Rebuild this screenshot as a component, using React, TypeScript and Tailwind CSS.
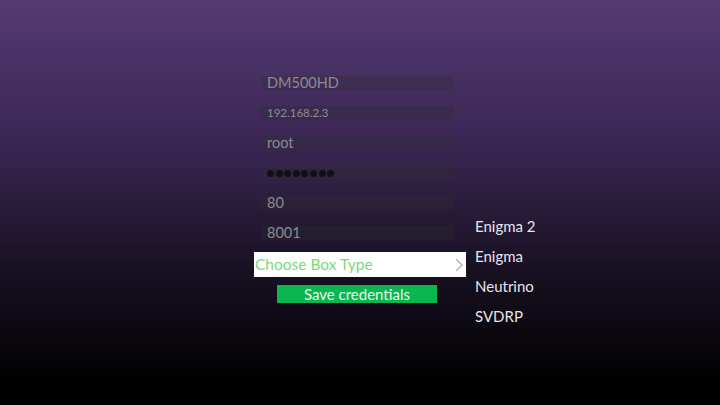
import React from "react";

const fields = ["DM500HD", "192.168.2.3", "root", "__dots__", "80", "8001"];
const types = ["Enigma 2", "Enigma", "Neutrino", "SVDRP"];

export default function App() {
  return (
    <div
      className="w-[720px] h-[405px] overflow-hidden bg-[linear-gradient(to_bottom,#553a72_0%,#3a2754_35%,#1a1224_65%,#000000_95%)] flex pl-[254px] pt-[76px]"
      style={{ fontFamily: "Lato, 'Noto Sans', sans-serif" }}
    >
      <div className="flex flex-col w-[212px]">
        {fields.map((f, i) => (
          <div
            key={i}
            className="ml-[7px] w-[193px] h-[14px] mb-[16px] bg-[rgba(45,45,50,0.3)] flex items-center pl-[6px] text-[#8e8a94] leading-none"
          >
            {f === "__dots__" ? (
              <div className="flex gap-[1.6px]">
                {Array.from({ length: 8 }).map((_, j) => (
                  <span key={j} className="w-[7px] h-[7px] rounded-full bg-[#121014]" />
                ))}
              </div>
            ) : (
              <span className={i === 1 ? "text-[11.5px]" : "text-[14.5px]"}>{f}</span>
            )}
          </div>
        ))}
        <div className="-mt-[4px] h-[25px] bg-white flex items-center justify-between pl-[1px] pr-[2px]">
          <span className="text-[15.5px] text-[#79da7c] leading-none">Choose Box Type</span>
          <svg width="10" height="16" viewBox="0 0 10 16" fill="none">
            <path d="M2 2 L8 8 L2 14" stroke="#b9b9b9" strokeWidth="1.5" />
          </svg>
        </div>
        <div className="mt-[8px] ml-[23px] w-[160px] h-[18px] bg-[#0bb54f] flex items-center justify-center">
          <span className="text-[15px] text-[#e9f7ec] leading-none">Save credentials</span>
        </div>
      </div>
      <div className="flex flex-col ml-[9px] mt-[135px]">
        {types.map((t) => (
          <div key={t} className="h-[30px] flex items-center text-[15px] text-[#e6e4ea] leading-none">
            {t}
          </div>
        ))}
      </div>
    </div>
  );
}
